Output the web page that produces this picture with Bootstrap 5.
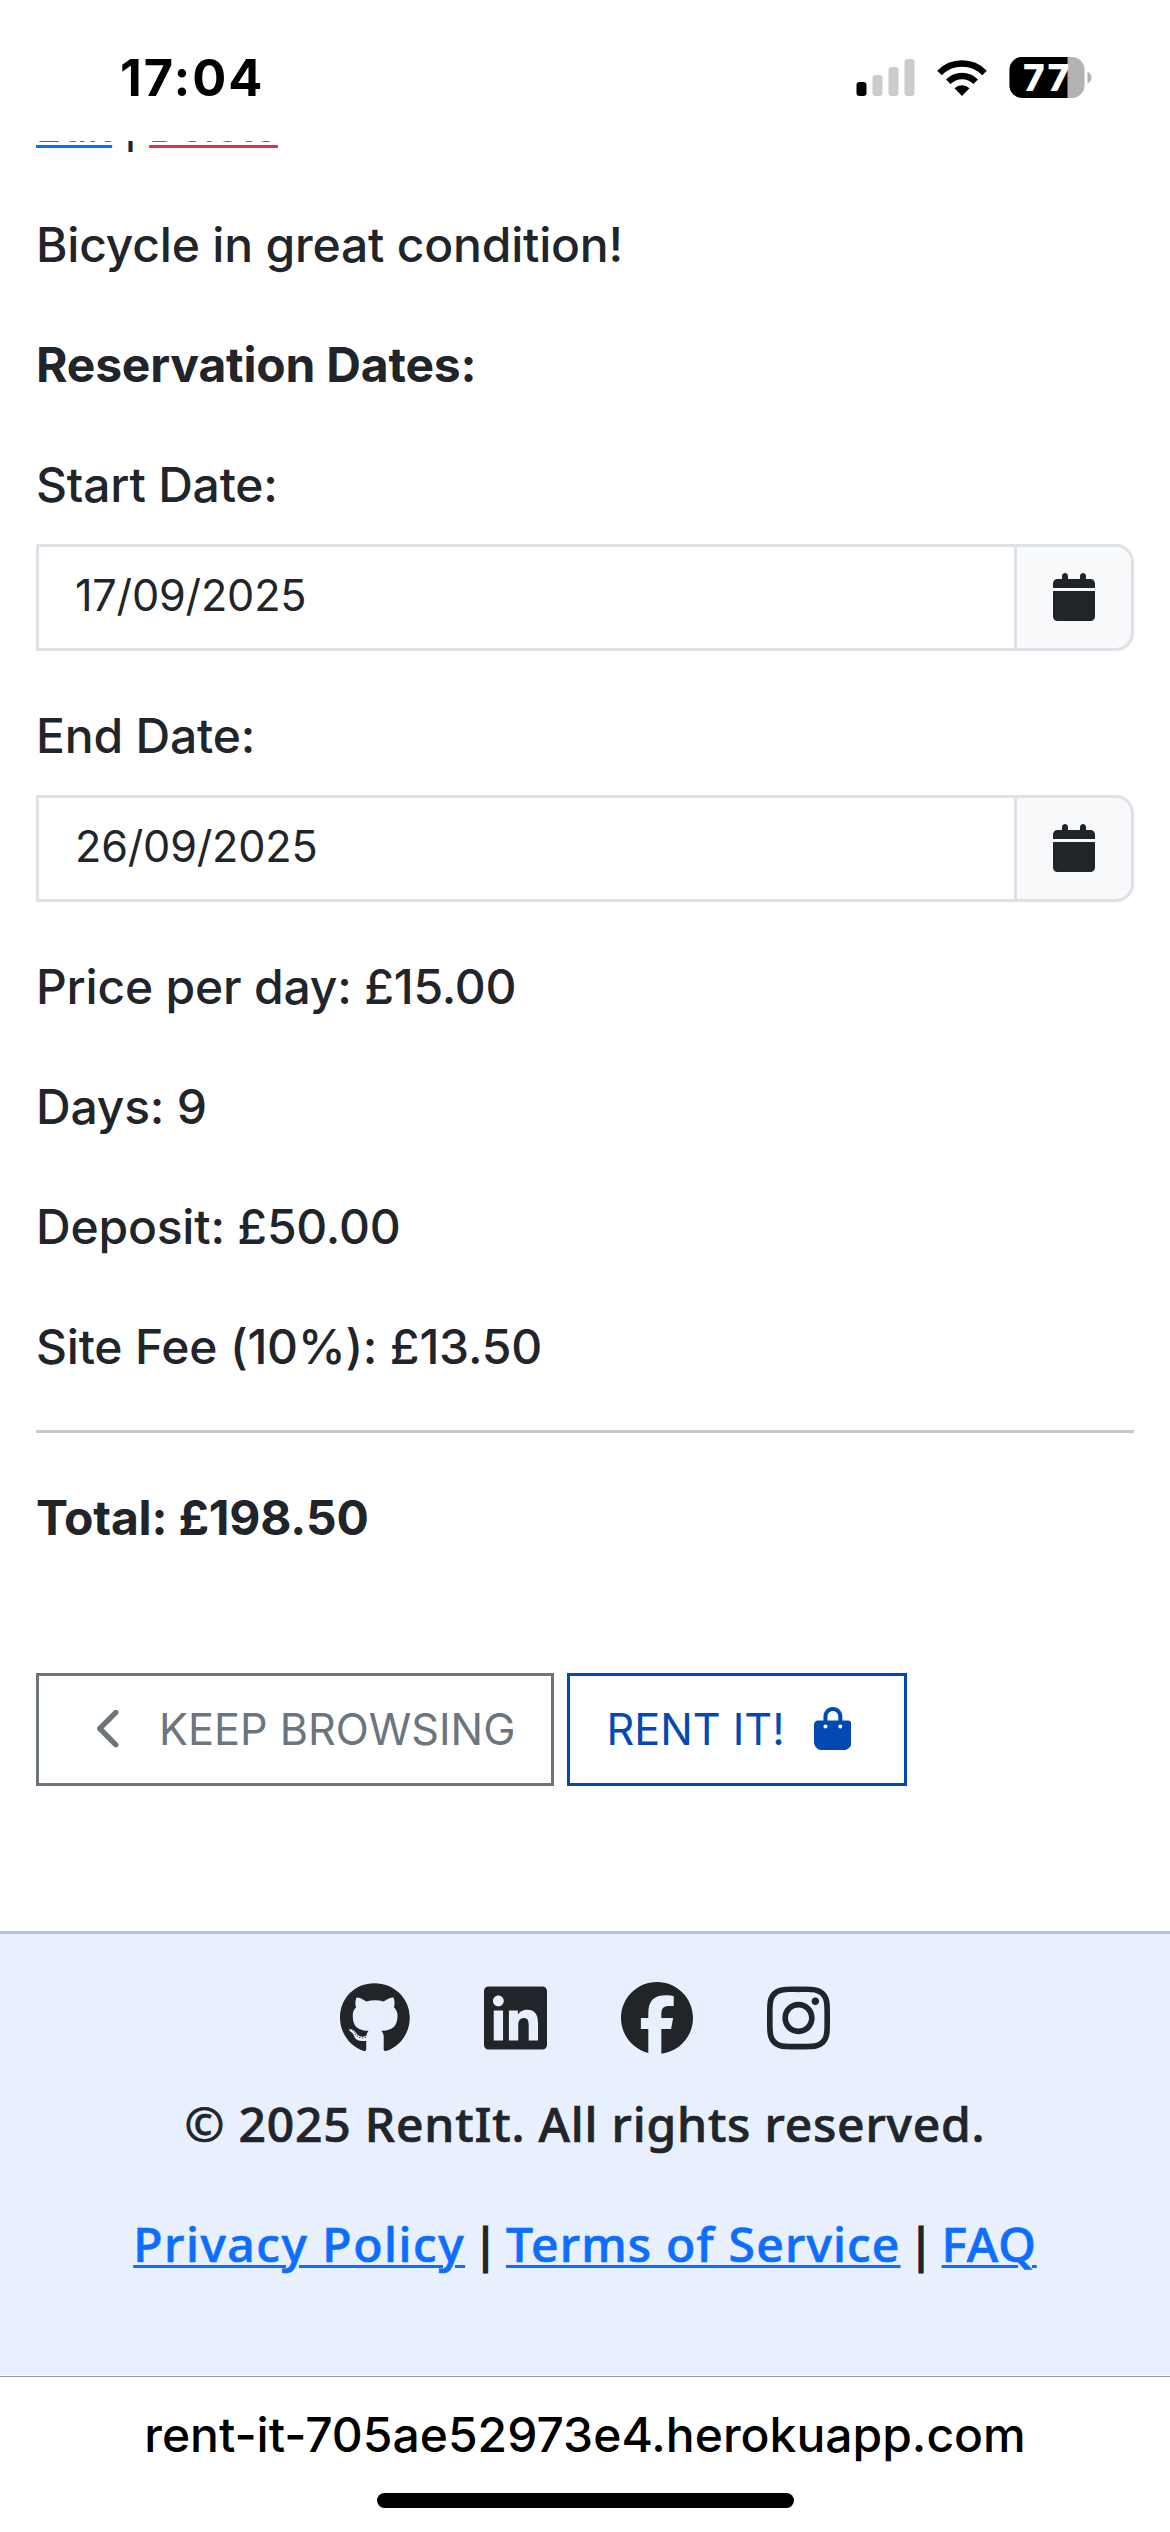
<!DOCTYPE html>
<html lang="en">
<head>
<meta charset="utf-8">
<meta name="viewport" content="width=device-width, initial-scale=1">
<title>RentIt</title>
<link href="https://cdn.jsdelivr.net/npm/bootstrap@5.3.0/dist/css/bootstrap.min.css" rel="stylesheet">
<style>
  html { font-size: 48px; }
  body { font-family: Inter, "Liberation Sans", sans-serif; font-weight: 500; color: #212529; height: 2532px; overflow: hidden; letter-spacing: -.2px; }
  svg { display: block; flex: none; }

  .status-bar { height: 141px; padding: 57px 78px 0 120px; color: #000; flex: none; }
  .status-time { font-size: 50.5px; font-weight: 700; line-height: 60px; letter-spacing: 2px; margin-top: -9px; }

  .page-view { flex: 1 1 0; min-height: 0; overflow: hidden; }
  .listing { margin-top: -52px; height: 1842px; flex: none; }
  .listing a, .listing .text-danger { text-decoration-thickness: 3px; text-underline-offset: 3px; text-decoration-skip-ink: none; }
  .listing .small { letter-spacing: 0; }

  .field-label { margin-bottom: 23px; }
  .date-group { margin-bottom: 49px; }
  .date-group .form-control { font-size: .9rem; border-width: 3px; border-radius: 0; padding: 16px 36px 20px; font-weight: 400; letter-spacing: -.2px; }
  .date-group .input-group-text { font-size: .9rem; border-width: 3px; border-radius: 0 18px 18px 0; background: #f8f9fa; padding: 0 36px; margin-left: -3px !important; }
  .date-group svg { width: 42px; height: 48px; }
  .fee-line { border-top: 3px solid #232629; opacity: .25; margin: 47px 0 49px; }

  .action { font-size: .9rem; font-weight: 400; letter-spacing: 0; border-width: 3px; border-radius: 0; padding: 21.5px 36px; }
  .action svg { margin-bottom: 2px; height: 43.2px; }
  .chevron { width: 27px; margin: 0 35px 0 22px; }
  .bag { width: 37.8px; margin: 0 17px 0 29px; }
  .rent { --bs-btn-color: #0349b4; --bs-btn-border-color: #0349b4; }
  .actions { gap: 13px; margin-top: 119px; }

  .site-footer { flex: none; height: 444px; border-top: 3px solid #b5c4e5; background: #e8effd; font-family: "Noto Sans", sans-serif; -webkit-text-stroke: .7px currentColor; }
  .socials { gap: 74px; }
  .socials svg { height: 72px; }
  .copy-line { margin: 34px 0 48px; letter-spacing: .8px; }
  .site-footer a { color: #0d6efd; text-decoration-thickness: 3px; text-underline-offset: 3px; }
  .link-privacy { letter-spacing: 1.55px; }
  .link-terms { letter-spacing: 1.2px; }
  .link-faq { letter-spacing: .9px; }
  .sep { width: 41px; display: flex; justify-content: center; letter-spacing: 0; -webkit-text-stroke-width: 1.2px; }

  .url-bar { flex: none; height: 157px; color: #000; border-top: 1px solid #fff; box-shadow: inset 0 1px #98989c; letter-spacing: 0; }
  .url-bar div:first-child { padding-top: 23px; }
  .home-bar { width: 417px; height: 15px; border-radius: 8px; background: #000; margin-top: 22px; }
</style>
<script src="https://cdn.jsdelivr.net/npm/bootstrap@5.3.0/dist/js/bootstrap.bundle.min.js"></script>
</head>
<body class="bg-white d-flex flex-column">

<header class="status-bar d-flex justify-content-between align-items-start">
  <div class="status-time">17:04</div>
  <svg width="236" height="42" viewBox="0 0 236 42">
    <rect x="0.500" y="25" width="10" height="14" rx="3"/>
    <g fill="#ccc"><rect x="16.500" y="18" width="10" height="21" rx="3"/><rect x="32.500" y="10" width="10" height="29" rx="3"/><rect x="48.500" y="2" width="10" height="37" rx="3"/></g>
    <path d="M106 39 98.500 31.200A11 11 0 0 1 113.500 31.200Z"/>
    <path d="M92.300 24.700A19.500 19.500 0 0 1 119.700 24.700M83.500 16A31.500 31.500 0 0 1 128.500 16" fill="none" stroke="#000" stroke-width="6.500"/>
    <clipPath id="cell"><rect x="153.500" y="0" width="75" height="41" rx="12.500"/></clipPath>
    <g clip-path="url(#cell)"><path fill="#b3b3b3" d="M153 0h76v41h-76z"/><path d="M153 0h58.500v41H153z"/></g>
    <path fill="#b3b3b3" d="M231.500 14.500q4 2 4 6t-4 6z"/>
    <text x="167" y="34" fill="#fff" font-family="Inter, sans-serif" font-weight="800" font-size="37" textLength="46" lengthAdjust="spacing">77</text>
  </svg>
</header>

<div class="page-view d-flex flex-column">
  <main class="listing container-fluid">
    <p class="mb-3"><span class="small"><a href="#">Edit</a> | <a href="#" class="text-danger">Delete</a></span></p>
    <p class="mb-3">Bicycle in great condition!</p>
    <p class="mb-3"><b>Reservation Dates:</b></p>

    <label class="d-block field-label" for="start">Start Date:</label>
    <div class="input-group date-group">
      <input id="start" class="form-control" type="text" value="17/09/2025">
      <span class="input-group-text"><svg viewBox="0 0 448 512" fill="currentColor"><path d="M96 32V64H48C21.500 64 0 85.500 0 112v48H448V112c0-26.500-21.500-48-48-48H352V32c0-17.700-14.300-32-32-32s-32 14.300-32 32V64H160V32c0-17.700-14.300-32-32-32S96 14.300 96 32zM448 192H0V464c0 26.500 21.500 48 48 48H400c26.500 0 48-21.500 48-48V192z"/></svg></span>
    </div>
    <label class="d-block field-label" for="end">End Date:</label>
    <div class="input-group date-group">
      <input id="end" class="form-control" type="text" value="26/09/2025">
      <span class="input-group-text"><svg viewBox="0 0 448 512" fill="currentColor"><path d="M96 32V64H48C21.500 64 0 85.500 0 112v48H448V112c0-26.500-21.500-48-48-48H352V32c0-17.700-14.300-32-32-32s-32 14.300-32 32V64H160V32c0-17.700-14.300-32-32-32S96 14.300 96 32zM448 192H0V464c0 26.500 21.500 48 48 48H400c26.500 0 48-21.500 48-48V192z"/></svg></span>
    </div>

    <p class="mb-3">Price per day: £15.00</p>
    <p class="mb-3">Days: 9</p>
    <p class="mb-3">Deposit: £50.00</p>
    <p class="mb-0">Site Fee (10%): £13.50</p>
    <hr class="fee-line">
    <p class="mb-0"><b>Total: £198.50</b></p>

    <div class="actions d-flex">
      <a href="#" class="btn btn-outline-secondary action d-flex align-items-center"><svg class="chevron" viewBox="0 0 320 512" fill="currentColor"><path d="M9.400 233.400c-12.500 12.500-12.500 32.800 0 45.300l192 192c12.500 12.500 32.800 12.500 45.300 0s12.500-32.800 0-45.300L77.300 256 246.600 86.600c12.500-12.500 12.500-32.800 0-45.300s-32.800-12.500-45.300 0l-192 192z"/></svg>KEEP BROWSING</a>
      <a href="#" class="btn btn-outline-primary rent action d-flex align-items-center">RENT IT!<svg class="bag" viewBox="0 0 448 512" fill="currentColor"><path d="M160 112c0-35.300 28.700-64 64-64s64 28.700 64 64v48H160V112zm-48 48H48c-26.500 0-48 21.500-48 48V416c0 53 43 96 96 96H352c53 0 96-43 96-96V208c0-26.500-21.500-48-48-48H336V112C336 50.100 285.900 0 224 0S112 50.100 112 112v48zm24 48a24 24 0 1 1 0 48 24 24 0 1 1 0-48zm152 24a24 24 0 1 1 48 0 24 24 0 1 1-48 0z"/></svg></a>
    </div>
  </main>

  <footer class="site-footer text-center pt-3">
    <div class="socials d-flex justify-content-center">
      <svg viewBox="0 0 496 512" fill="currentColor"><path d="M165.900 397.400c0 2-2.300 3.600-5.200 3.600-3.300.3-5.600-1.300-5.600-3.600 0-2 2.300-3.600 5.200-3.600 3-.3 5.600 1.300 5.600 3.600zm-31.100-4.500c-.7 2 1.300 4.300 4.300 4.900 2.600 1 5.600 0 6.200-2s-1.300-4.300-4.300-5.200c-2.600-.7-5.500.3-6.200 2.300zm44.200-1.700c-2.900.7-4.900 2.600-4.600 4.900.3 2 2.900 3.300 5.900 2.600 2.900-.7 4.900-2.600 4.600-4.600-.3-1.900-3-3.200-5.900-2.900zM244.800 8C106.100 8 0 113.300 0 252c0 110.900 69.800 205.800 169.500 239.200 12.800 2.300 17.300-5.600 17.300-12.100 0-6.200-.3-40.400-.3-61.400 0 0-70 15-84.700-29.800 0 0-11.400-29.100-27.800-36.600 0 0-22.900-15.700 1.600-15.400 0 0 24.900 2 38.600 25.800 21.900 38.600 58.600 27.500 72.900 20.900 2.300-16 8.800-27.100 16-33.700-55.900-6.200-112.300-14.300-112.300-110.500 0-27.500 7.600-41.300 23.600-58.900-2.600-6.500-11.100-33.300 2.600-67.900 20.900-6.500 69 27 69 27 20-5.600 41.500-8.500 62.800-8.500s42.800 2.900 62.800 8.500c0 0 48.100-33.600 69-27 13.700 34.700 5.200 61.400 2.600 67.900 16 17.700 25.800 31.500 25.800 58.900 0 96.500-58.900 104.200-114.800 110.500 9.200 7.900 17 22.900 17 46.400 0 33.700-.3 75.400-.3 83.600 0 6.500 4.600 14.400 17.300 12.100C428.200 457.800 496 362.900 496 252 496 113.300 383.500 8 244.800 8zM97.200 352.900c-1.300 1-1 3.300.7 5.200 1.600 1.600 3.900 2.300 5.200 1 1.300-1 1-3.300-.7-5.200-1.600-1.600-3.900-2.300-5.200-1zm-10.800-8.100c-.7 1.300.3 2.900 2.300 3.900 1.600 1 3.600.7 4.300-.7.7-1.300-.3-2.900-2.300-3.900-2-.6-3.600-.3-4.300.7zm32.400 35.600c-1.600 1.300-1 4.300 1.300 6.200 2.300 2.300 5.200 2.600 6.500 1 1.300-1.300.7-4.300-1.300-6.200-2.200-2.300-5.200-2.600-6.500-1zm-11.400-14.700c-1.600 1-1.600 3.600 0 5.900 1.600 2.300 4.300 3.300 5.600 2.300 1.600-1.300 1.600-3.900 0-6.200-1.400-2.300-4-3.300-5.600-2z"/></svg>
      <svg viewBox="0 0 448 512" fill="currentColor"><path d="M416 32H31.900C14.300 32 0 46.500 0 64.300v383.400C0 465.500 14.300 480 31.900 480H416c17.600 0 32-14.500 32-32.300V64.300c0-17.800-14.400-32.300-32-32.300zM135.400 416H69V202.200h66.500V416zm-33.200-243c-21.300 0-38.500-17.300-38.500-38.500S80.900 96 102.200 96c21.200 0 38.500 17.300 38.500 38.500 0 21.300-17.200 38.500-38.500 38.500zm282.100 243h-66.400V312c0-24.800-.5-56.700-34.500-56.700-34.600 0-39.900 27-39.900 54.900V416h-66.400V202.200h63.700v29.200h.9c8.900-16.800 30.600-34.500 62.900-34.500 67.200 0 79.700 44.300 79.700 101.900V416z"/></svg>
      <svg viewBox="0 0 512 512" fill="currentColor"><path d="M512 256C512 114.600 397.400 0 256 0S0 114.600 0 256C0 376 82.700 476.800 194.200 504.500V334.200H141.400V256h52.800V222.300c0-87.100 39.400-127.500 125-127.500c16.200 0 44.200 3.200 55.700 6.400V172c-6-.6-16.500-1-29.600-1c-42 0-58.200 15.900-58.200 57.200V256h83.600l-14.400 78.200H287V510.100C413.800 494.800 512 386.900 512 256h0z"/></svg>
      <svg viewBox="0 0 448 512" fill="currentColor"><path d="M224.100 141c-63.600 0-114.900 51.300-114.900 114.900s51.300 114.900 114.900 114.900S339 319.500 339 255.900 287.700 141 224.100 141zm0 189.600c-41.100 0-74.700-33.500-74.700-74.700s33.500-74.700 74.700-74.700 74.700 33.500 74.700 74.700-33.600 74.700-74.700 74.700zm146.400-194.300c0 14.900-12 26.800-26.800 26.800-14.900 0-26.800-12-26.800-26.800s12-26.800 26.800-26.800 26.800 12 26.800 26.800zm76.100 27.200c-1.700-35.900-9.900-67.700-36.200-93.900-26.200-26.200-58-34.400-93.900-36.200-37-2.100-147.900-2.100-184.900 0-35.800 1.700-67.600 9.900-93.900 36.100s-34.400 58-36.200 93.900c-2.100 37-2.100 147.900 0 184.900 1.700 35.900 9.900 67.700 36.200 93.900s58 34.400 93.900 36.200c37 2.100 147.900 2.100 184.900 0 35.900-1.700 67.700-9.900 93.900-36.200 26.200-26.200 34.400-58 36.200-93.900 2.100-37 2.100-147.800 0-184.800zM398.800 388c-7.800 19.600-22.900 34.700-42.600 42.600-29.500 11.700-99.500 9-132.100 9s-102.700 2.600-132.100-9c-19.600-7.800-34.700-22.900-42.600-42.600-11.700-29.500-9-99.500-9-132.100s-2.600-102.700 9-132.100c7.800-19.600 22.900-34.700 42.600-42.600 29.500-11.700 99.500-9 132.100-9s102.700-2.600 132.100 9c19.600 7.800 34.700 22.900 42.600 42.600 11.700 29.500 9 99.500 9 132.100s2.700 102.700-9 132.100z"/></svg>
    </div>
    <p class="copy-line">© 2025 RentIt. All rights reserved.</p>
    <div class="d-flex justify-content-center">
      <a href="#" class="link-privacy">Privacy Policy</a><span class="sep">|</span><a href="#" class="link-terms">Terms of Service</a><span class="sep">|</span><a href="#" class="link-faq">FAQ</a>
    </div>
  </footer>
</div>

<div class="url-bar d-flex flex-column align-items-center">
  <div>rent-it-705ae52973e4.herokuapp.com</div>
  <div class="home-bar"></div>
</div>
</body>
</html>
